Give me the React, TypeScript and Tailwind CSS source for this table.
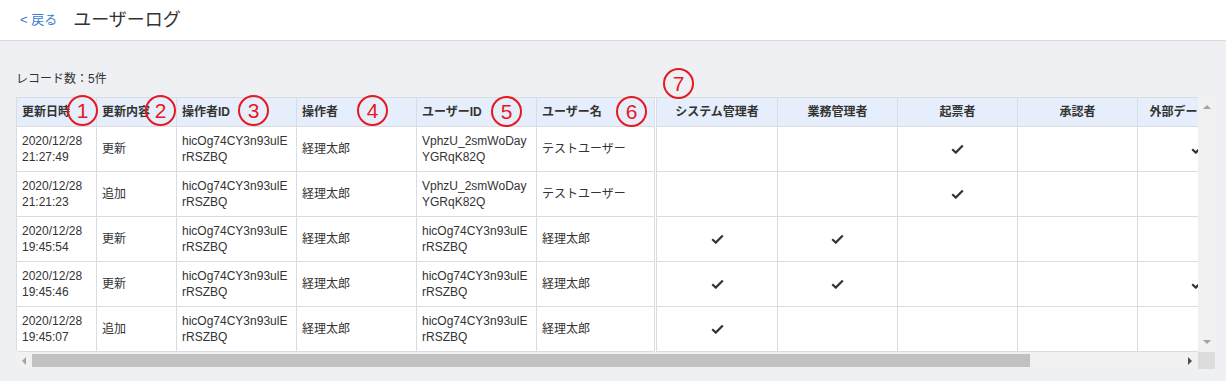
import React from 'react';

type Row = {
  dt: [string, string];
  op: string;
  opId: [string, string];
  opName: string;
  userId: string[];
  userName: string;
  roles: boolean[];
};

const rows: Row[] = [
  { dt: ['2020/12/28', '21:27:49'], op: '更新', opId: ['hicOg74CY3n93ulE', 'rRSZBQ'], opName: '経理太郎', userId: ['VphzU_2smWoDay', 'YGRqK82Q'], userName: 'テストユーザー', roles: [false, false, true, false, true] },
  { dt: ['2020/12/28', '21:21:23'], op: '追加', opId: ['hicOg74CY3n93ulE', 'rRSZBQ'], opName: '経理太郎', userId: ['VphzU_2smWoDay', 'YGRqK82Q'], userName: 'テストユーザー', roles: [false, false, true, false, false] },
  { dt: ['2020/12/28', '19:45:54'], op: '更新', opId: ['hicOg74CY3n93ulE', 'rRSZBQ'], opName: '経理太郎', userId: ['hicOg74CY3n93ulE', 'rRSZBQ'], userName: '経理太郎', roles: [true, true, false, false, false] },
  { dt: ['2020/12/28', '19:45:46'], op: '更新', opId: ['hicOg74CY3n93ulE', 'rRSZBQ'], opName: '経理太郎', userId: ['hicOg74CY3n93ulE', 'rRSZBQ'], userName: '経理太郎', roles: [true, true, false, false, true] },
  { dt: ['2020/12/28', '19:45:07'], op: '追加', opId: ['hicOg74CY3n93ulE', 'rRSZBQ'], opName: '経理太郎', userId: ['hicOg74CY3n93ulE', 'rRSZBQ'], userName: '経理太郎', roles: [true, false, false, false, false] },
];

const roleHeaders = ['システム管理者', '業務管理者', '起票者', '承認者', '外部データ連携者', '閲覧者'];

// left (frozen) column widths, each includes its right border
const leftCols = ['w-[80px]', 'w-[80px]', 'w-[120px]', 'w-[120px]', 'w-[120px]', 'w-[117px]'];
const rightCols = ['w-[121px]', 'w-[120px]', 'w-[120px]', 'w-[120px]', 'w-[120px]', 'w-[120px]'];

const marks = [
  { n: '1', cls: 'left-[67px] top-[95px]' },
  { n: '2', cls: 'left-[145px] top-[95px]' },
  { n: '3', cls: 'left-[238px] top-[95px]' },
  { n: '4', cls: 'left-[357px] top-[95px]' },
  { n: '5', cls: 'left-[491px] top-[96px]' },
  { n: '6', cls: 'left-[616px] top-[96px]' },
  { n: '7', cls: 'left-[663px] top-[68px]' },
];

function Check() {
  return (
    <svg width="13" height="10" viewBox="0 0 13 10" className="text-[#333]">
      <path d="M1.2 5.2 L4.8 8.6 L11.8 1.4" fill="none" stroke="currentColor" strokeWidth="2.2" />
    </svg>
  );
}

function Lines({ lines }: { lines: string[] }) {
  return (
    <div className="flex flex-col leading-[16px]">
      {lines.map((l) => (
        <span key={l}>{l}</span>
      ))}
    </div>
  );
}

function Tri({ dir, color }: { dir: 'up' | 'down' | 'left' | 'right'; color: string }) {
  const pts = {
    up: '0,4 4,0 8,4',
    down: '0,0 8,0 4,4',
    left: '4,0 4,8 0,4',
    right: '0,0 0,8 4,4',
  }[dir];
  const w = dir === 'up' || dir === 'down' ? 8 : 4;
  const h = dir === 'up' || dir === 'down' ? 4 : 8;
  return (
    <svg width={w} height={h} viewBox={`0 0 ${w} ${h}`}>
      <polygon points={pts} fill={color} />
    </svg>
  );
}

export default function App() {
  const cellBase = 'border-r border-[#d9dce3] flex items-center px-[5px] shrink-0';
  const leftCells = (r: Row) => [
    <Lines lines={r.dt} />,
    <span>{r.op}</span>,
    <Lines lines={r.opId} />,
    <span>{r.opName}</span>,
    <Lines lines={r.userId} />,
    <span>{r.userName}</span>,
  ];

  return (
    <div className="relative w-[1226px] h-[381px] overflow-hidden bg-[#eff0f4] text-[#333] font-['Liberation_Sans','Noto_Sans_CJK_JP',sans-serif]">
      <div className="h-[41px] bg-white border-b border-[#d9dbe0] flex items-center pl-[20px]">
        <a className="text-[13px] text-[#3b7bd0] cursor-pointer">&lt; 戻る</a>
        <h1 className="ml-[16px] text-[18px] text-[#333]">ユーザーログ</h1>
      </div>

      <div className="pl-4 pt-[30px]">
        <div className="text-[12px] leading-[16px] mb-[10px]">レコード数：5件</div>

        <div className="flex w-[1199px]">
          <div className="w-[1182px] h-[255px] border-t border-l border-[#d9dce3] bg-white overflow-hidden flex rounded-bl-[3px] text-[12px]">
            {/* frozen columns */}
            <div className="flex flex-col shrink-0 border-r border-[#d9dce3]">
              <div className="flex h-[29px] bg-[#e5eefa] border-b border-[#d9dce3] font-bold">
                {['更新日時', '更新内容', '操作者ID', '操作者', 'ユーザーID', 'ユーザー名'].map((h, i) => (
                  <div key={h} className={`${cellBase} ${leftCols[i]} ${i === 5 ? 'border-r-0' : ''}`}>{h}</div>
                ))}
              </div>
              {rows.map((r, ri) => (
                <div key={ri} className="flex h-[45px] border-b border-[#d9dce3]">
                  {leftCells(r).map((c, i) => (
                    <div key={i} className={`${cellBase} ${leftCols[i]} ${i === 5 ? 'border-r-0' : ''}`}>{c}</div>
                  ))}
                </div>
              ))}
            </div>
            <div className="w-[1px] shrink-0 bg-white" />
            {/* scrolling columns */}
            <div className="flex flex-col shrink-0 border-l border-[#d9dce3]">
              <div className="flex h-[29px] bg-[#e5eefa] border-b border-[#d9dce3] font-bold">
                {roleHeaders.map((h, i) => (
                  <div key={h} className={`border-r border-[#d9dce3] flex items-center justify-center shrink-0 ${rightCols[i]}`}>{h}</div>
                ))}
              </div>
              {rows.map((r, ri) => (
                <div key={ri} className="flex h-[45px] border-b border-[#d9dce3]">
                  {rightCols.map((w, i) => (
                    <div key={i} className={`border-r border-[#d9dce3] flex items-center justify-center shrink-0 ${w}`}>
                      {r.roles[i] ? <Check /> : null}
                    </div>
                  ))}
                </div>
              ))}
            </div>
          </div>

          {/* vertical scrollbar */}
          <div className="w-[17px] h-[255px] bg-[#f1f1f1] flex flex-col items-center justify-between py-[8px]">
            <Tri dir="up" color="#a3a3a3" />
            <Tri dir="down" color="#a3a3a3" />
          </div>
        </div>

        {/* horizontal scrollbar */}
        <div className="flex w-[1199px] h-[17px]">
          <div className="w-[1182px] bg-[#f1f1f1] flex items-center">
            <div className="w-[16px] flex justify-center">
              <Tri dir="left" color="#a3a3a3" />
            </div>
            <div className="w-[998px] h-[13px] bg-[#c1c1c1]" />
            <div className="flex-1" />
            <div className="w-[16px] flex justify-center">
              <Tri dir="right" color="#505050" />
            </div>
          </div>
          <div className="w-[17px] bg-[#dcdcdc]" />
        </div>
      </div>

      {/* annotation markers */}
      {marks.map((m) => (
        <div
          key={m.n}
          className={`absolute ${m.cls} w-[31px] h-[31px] rounded-full border-2 border-[#e5191f] text-[#e5191f] flex items-center justify-center text-[21px] leading-none font-['Liberation_Sans',sans-serif]`}
        >
          {m.n}
        </div>
      ))}
    </div>
  );
}
